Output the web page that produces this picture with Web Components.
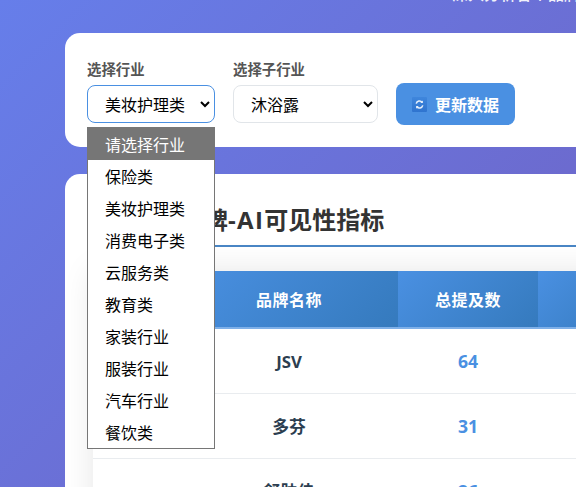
<!DOCTYPE html>
<html lang="zh">
<head>
<meta charset="utf-8">
<title>品牌AI可见性指标</title>
<style>
  html, body { margin: 0; height: 487px; overflow: hidden; }
  body {
    background: linear-gradient(135deg, #667eea, #764ba2) 0 0 / 576px 1400px no-repeat;
    font-family: "Open Sans", "Noto Sans CJK SC", sans-serif;
  }
</style>
</head>
<body>
<app-page>
  <span slot="subtitle">深入分析各个品牌</span>
  <filter-panel slot="filters"></filter-panel>
  <brand-table slot="table"></brand-table>
</app-page>

<script>
const FONT = '"Open Sans", "Noto Sans CJK SC", sans-serif';
const CJK = '"Noto Sans CJK SC", "Noto Sans", sans-serif';

class AppPage extends HTMLElement {
  connectedCallback() {
    this.attachShadow({ mode: 'open' });
    this.shadowRoot.innerHTML = `
      <style>
        :host { display: block; height: 487px; overflow: hidden; }
        .subtitle { height: 49px; margin-top: -16px; padding-left: 452px; color: #fff; font-size: 16px; font-weight: 500; line-height: 20px; white-space: nowrap; opacity: .9; }
        .main { padding-left: 65px; width: 640px; display: flex; flex-direction: column; gap: 27px; }
      </style>
      <div class="subtitle"><slot name="subtitle"></slot></div>
      <div class="main">
        <slot name="filters"></slot>
        <slot name="table"></slot>
      </div>
    `;
  }
}

class SelectBox extends HTMLElement {
  connectedCallback() {
    const label = this.getAttribute('label');
    const value = this.getAttribute('value');
    const focused = this.hasAttribute('focused');
    this.attachShadow({ mode: 'open' });
    this.shadowRoot.innerHTML = `
      <style>
        :host { display: flex; flex-direction: column; gap: 6px; font-family: ${CJK}; }
        .label { font-size: 14.4px; line-height: 20px; font-weight: 600; color: #555; white-space: nowrap; }
        .box {
          box-sizing: border-box; height: 38px; border-radius: 8px; background: #fff;
          border: 1px solid ${focused ? '#4a90e2' : '#e1e5e9'};
          display: flex; align-items: center; justify-content: space-between;
          padding: 0 3px 0 17px; color: #000; font-size: 16px;
        }
        svg { width: 12px; height: 12px; }
      </style>
      <div class="label">${label}</div>
      <div class="box">
        <span>${value}</span>
        <svg viewBox="0 0 12 12"><path d="M2 4l4 4 4-4" fill="none" stroke="#000" stroke-width="2"/></svg>
      </div>
    `;
    this.style.width = this.getAttribute('w') + 'px';
  }
}

class FilterPanel extends HTMLElement {
  connectedCallback() {
    this.attachShadow({ mode: 'open' });
    this.shadowRoot.innerHTML = `
      <style>
        :host { display: flex; box-sizing: border-box; height: 114px; width: 600px; position: relative; background: #fff; border-radius: 15px; padding: 26px 22px 0; font-family: ${CJK}; align-items: flex-start; gap: 18px; }
        .btn {
          margin-top: 24px;
          box-sizing: border-box; width: 119px; height: 42px; border-radius: 8px; background: #4a90e2;
          color: #fff; font-size: 16px; font-weight: 700; display: flex; align-items: center; justify-content: center; gap: 8px;
        }
        .ico { width: 15px; height: 15px; display: block; }
        .menu { position: absolute; left: 22px; top: 94px; width: 128px; box-sizing: border-box; border: 1px solid #767676; background: #fff; font-size: 16px; color: #000; z-index: 5; }
        .menu div { height: 32px; line-height: 32px; padding-left: 17px; }
        .menu .sel { background: #767676; color: #fff; }
      </style>
      <select-box label="选择行业" value="美妆护理类" w="128" focused></select-box>
      <select-box label="选择子行业" value="沐浴露" w="145"></select-box>
      <div class="btn">
        <svg class="ico" viewBox="0 0 16 16"><defs><linearGradient id="g" x1="0" y1="0" x2="0" y2="1"><stop offset="0" stop-color="#3f86dc"/><stop offset="1" stop-color="#2f74cf"/></linearGradient></defs><rect width="16" height="16" rx="1" fill="url(#g)"/><path d="M4.5 7a3.6 3.6 0 0 1 6.3-1.4M11.5 9a3.6 3.6 0 0 1-6.3 1.4" fill="none" stroke="#e8f1fb" stroke-width="1.6"/><path d="M11.6 3.6v2.8H8.8zM4.4 12.4V9.6h2.8z" fill="#e8f1fb"/></svg>
        <span>更新数据</span>
      </div>
      <div class="menu">
        <div class="sel">请选择行业</div>
        <div>保险类</div><div>美妆护理类</div><div>消费电子类</div><div>云服务类</div>
        <div>教育类</div><div>家装行业</div><div>服装行业</div><div>汽车行业</div><div>餐饮类</div>
      </div>
    `;
  }
}

class BrandTable extends HTMLElement {
  connectedCallback() {
    this.attachShadow({ mode: 'open' });
    const rows = [['1', 'JSV', '64'], ['2', '多芬', '31'], ['3', '舒肤佳', '26']];
    this.shadowRoot.innerHTML = `
      <style>
        :host { display: block; box-sizing: border-box; width: 600px; height: 400px; background: #fff; border-radius: 15px; padding: 27px 28px 28px; font-family: ${FONT}; }
        h2 { margin: 0 0 24px; padding-left: 87px; font-size: 24px; line-height: 38px; font-weight: 700; color: #333; border-bottom: 2px solid #4a86c5; height: 46px; box-sizing: border-box; white-space: nowrap; }
        h2 span { letter-spacing: 1.3px; }
        .tbl { box-shadow: 0 0 30px rgba(0,0,0,.1); }
        .row { display: grid; grid-template-columns: 87px 218px 140px 1fr; }
        .head { height: 58px; background: #4a90e2; border-bottom: 2px solid #7fb0e8; box-sizing: border-box; color: #fff; font-size: 16px; font-weight: 700; letter-spacing: .5px; }
        .head > div { display: flex; align-items: center; justify-content: center; background: linear-gradient(135deg, #4a90e2, #357abd); }
        .body { height: 65px; border-bottom: 1px solid #e9ecef; box-sizing: border-box; background: #fff; align-items: center; text-align: center; font-size: 16.8px; }
        .name { font-weight: 700; color: #2c3e50; }
        .num { font-weight: 700; color: #4a90e2; font-size: 17.6px; }
        .rank { font-weight: 700; color: #4a90e2; font-size: 14.4px; }
      </style>
      <h2>品牌<span>-AI</span>可见性指标</h2>
      <div class="tbl">
        <div class="row head"><div></div><div>品牌名称</div><div>总提及数</div><div></div></div>
        ${rows.map(r => `<div class="row body"><div class="rank">${r[0]}</div><div class="name">${r[1]}</div><div class="num">${r[2]}</div><div></div></div>`).join('')}
      </div>
    `;
  }
}

customElements.define('app-page', AppPage);
customElements.define('select-box', SelectBox);
customElements.define('filter-panel', FilterPanel);
customElements.define('brand-table', BrandTable);
</script>
</body>
</html>
